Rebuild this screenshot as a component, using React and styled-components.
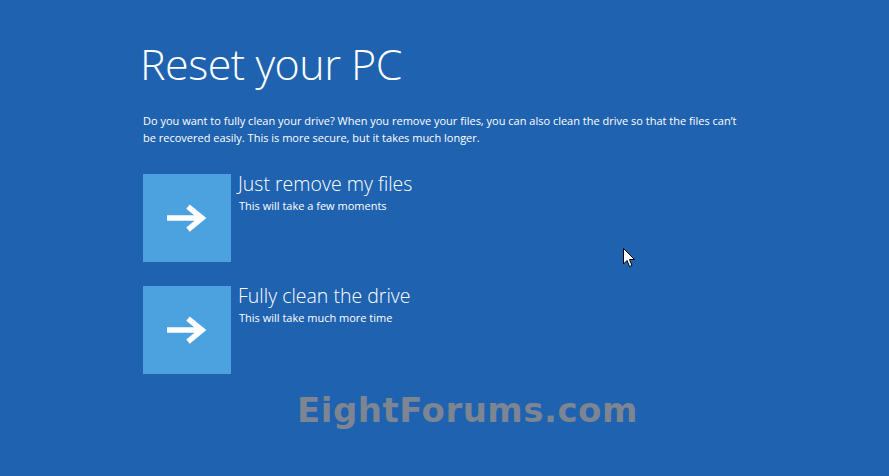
import React from "react";
import styled, { createGlobalStyle } from "styled-components";

const Global = createGlobalStyle`
  html, body { margin: 0; padding: 0; }
  body { background: #1f63b0; font-family: "Open Sans", "Noto Sans", sans-serif; }
`;

const Screen = styled.div`
  position: relative;
  width: 889px;
  height: 476px;
  background: #1f63b0;
  color: #fff;
  overflow: hidden;
  box-sizing: border-box;
  padding: 36px 0 0 143px;
  display: flex;
  flex-direction: column;
`;

const Title = styled.h1`
  margin: 0 0 0 -3px;
  font-family: "Open Sans", sans-serif;
  font-weight: 300;
  font-size: 43px;
  line-height: 56px;
  letter-spacing: -0.5px;
`;

const Description = styled.p`
  margin: 20px 0 0 0;
  width: 602px;
  font-family: "Open Sans", sans-serif;
  font-size: 11px;
  line-height: 17px;
  letter-spacing: 0px;
`;

const Options = styled.div`
  margin-top: 28px;
  display: flex;
  flex-direction: column;
  gap: 24px;
`;

const Option = styled.div`
  display: flex;
  align-items: flex-start;
  gap: 7px;
`;

const Tile = styled.div`
  width: 88px;
  height: 88px;
  background: #4ca2df;
  display: flex;
  align-items: center;
  justify-content: center;
`;

const OptionText = styled.div`
  display: flex;
  flex-direction: column;
`;

const OptionTitle = styled.div`
  font-family: "Open Sans", sans-serif;
  font-weight: 300;
  font-size: 19.5px;
  line-height: 22px;
  margin-top: -1px;
`;

const OptionSub = styled.div`
  font-family: "Open Sans", sans-serif;
  font-size: 11px;
  line-height: 16px;
  margin-top: 3px;
  margin-left: 1px;
`;

const Watermark = styled.div`
  margin: 16px 0 0 154px;
  font-family: "DejaVu Sans", sans-serif;
  font-weight: 700;
  font-size: 34px;
  letter-spacing: 0.5px;
  color: #7c8591;
`;

const Cursor = styled.svg`
  position: absolute;
  left: 623px;
  top: 248px;
`;

const Arrow = () => (
  <svg width="44" height="30" viewBox="0 0 44 30">
    <path d="M2 15 H35 M23 3.5 L37 15 L23 26.5" stroke="#fff" strokeWidth="5.5" fill="none" strokeLinecap="butt" strokeLinejoin="miter" />
  </svg>
);

const options = [
  { title: "Just remove my files", sub: "This will take a few moments" },
  { title: "Fully clean the drive", sub: "This will take much more time" },
];

export default function App() {
  return (
    <Screen>
      <Global />
      <Title>Reset your PC</Title>
      <Description>
        Do you want to fully clean your drive? When you remove your files, you can also clean the drive so that the files can’t be recovered easily. This is more secure, but it takes much longer.
      </Description>
      <Options>
        {options.map((o) => (
          <Option key={o.title}>
            <Tile><Arrow /></Tile>
            <OptionText>
              <OptionTitle>{o.title}</OptionTitle>
              <OptionSub>{o.sub}</OptionSub>
            </OptionText>
          </Option>
        ))}
      </Options>
      <Watermark>EightForums.com</Watermark>
      <Cursor width="14" height="20" viewBox="0 0 14 20">
        <path d="M0.5 0.5 L0.5 16 L4 12.5 L6.5 18.5 L9 17.5 L6.5 11.5 L11.5 11.5 Z" fill="#fff" stroke="#000" strokeWidth="1" />
      </Cursor>
    </Screen>
  );
}
